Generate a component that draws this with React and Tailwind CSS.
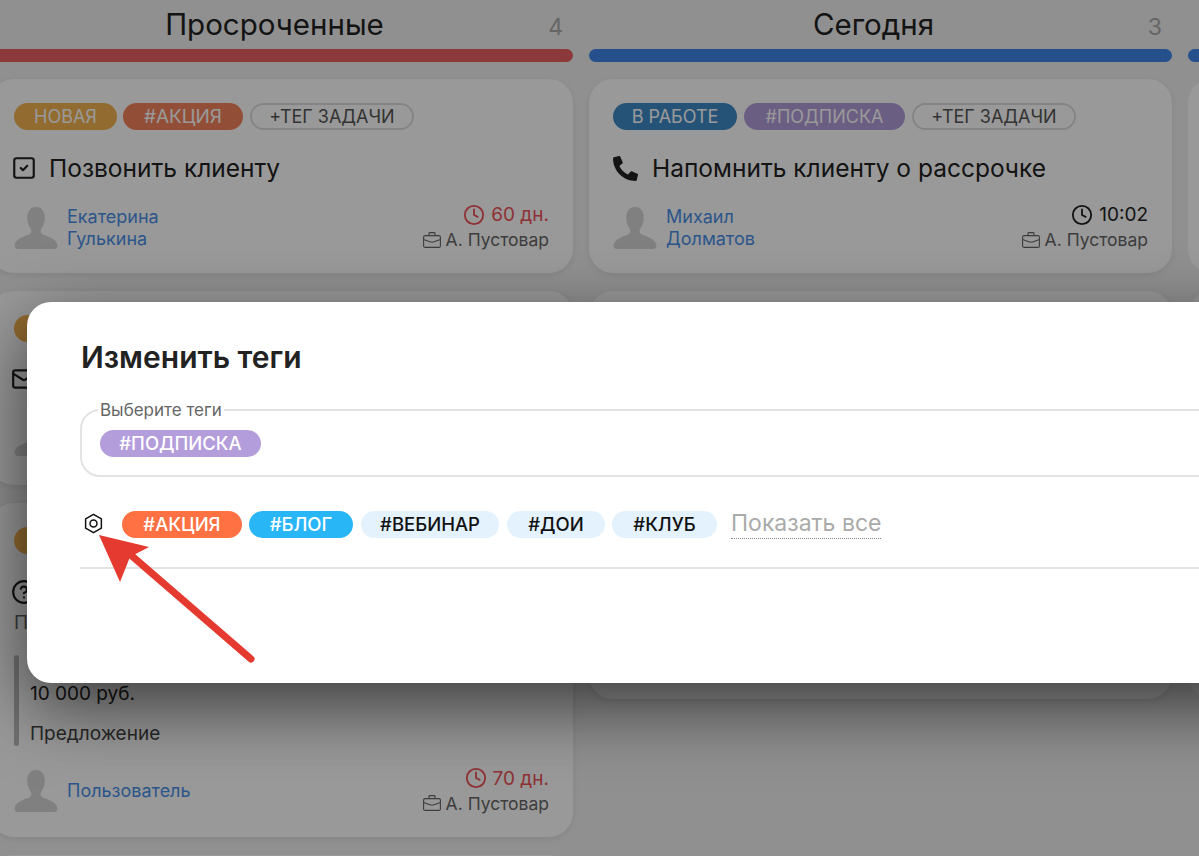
import React from 'react'
import { Clock, SquareCheck, Mail, CircleHelp } from 'lucide-react'
import { FaPhoneAlt } from 'react-icons/fa'

const font = { fontFamily: 'Inter, "Noto Sans", sans-serif' }

const Avatar = () => (
  <svg viewBox="0 0 44 43" className="w-[44px] h-[42px] shrink-0 text-[#d6d6d6]" fill="currentColor">
    <path d="M22 0c6 0 9 5 9 11 0 5-2 9-4 12-1 3 1 5 4 6 6 2 12 5 13 10 0 2-1 4-3 4H3c-2 0-3-2-3-4 1-5 7-8 13-10 3-1 5-3 4-6-2-3-4-7-4-12 0-6 3-11 9-11z" />
  </svg>
)

const Case = () => (
  <svg viewBox="0 0 18 16" className="w-[18px] h-[16px]" fill="none" stroke="currentColor" strokeWidth="1.1" strokeLinejoin="round">
    <rect x="0.6" y="3.6" width="16.8" height="11.8" rx="1.5" />
    <path d="M6 3.6V1.4c0-.5.3-.8.8-.8h4.4c.5 0 .8.3.8.8v2.2" />
    <path d="M0.6 7.5 7.5 10h3l6.9-2.5" />
  </svg>
)

const Tag = ({ children, className }) => (
  <span className={`h-[27px] rounded-full flex items-center justify-center leading-none whitespace-nowrap ${className}`}>{children}</span>
)

const Footer = ({ name, time, late }) => (
  <div className="flex justify-between items-start">
    <div className="flex items-center gap-[9px] text-[18px] leading-[22px] text-[#4a8fe8]">
      <Avatar />
      <div>{name.map((n) => <div key={n}>{n}</div>)}</div>
    </div>
    <div className="flex flex-col items-end -mt-[4px]">
      <div className={`flex items-center gap-[6px] text-[19px] leading-[25px] ${late ? 'text-[#ee5358]' : 'text-[#222]'}`}>
        <Clock size={22} strokeWidth={2} />
        {time}
      </div>
      <div className="flex items-center gap-[5px] text-[17.5px] leading-[25px] text-[#666]">
        <Case />
        А. Пустовар
      </div>
    </div>
  </div>
)

const Card = ({ tags, addWidth, icon, title, children, footer, className }) => (
  <div className={`bg-white rounded-[24px] px-6 pt-6 shadow-[0_2px_6px_rgba(0,0,0,0.08)] ${className}`}>
    <div className="flex gap-[7px]">
      {tags}
      {addWidth && <Tag className={`text-[18px] border-2 border-[#ddd] text-[#555] ${addWidth}`}>+ТЕГ ЗАДАЧИ</Tag>}
    </div>
    <div className="flex items-center gap-[14px] mt-[23px] h-[30px] text-[24.5px] leading-[30px] text-[#222]">
      {icon}
      {title}
    </div>
    {children}
    <div className="mt-[23px]">{footer}</div>
  </div>
)

const Column = ({ title, count, bar, children }) => (
  <div className="w-[583px] shrink-0">
    <div className="relative h-[49px] pr-[14px] flex items-center justify-center text-[29.5px] text-[#222]">
      {title}
      <span className="absolute right-[10px] top-[13px] text-[23px] leading-[28px] text-[#aaa]">{count}</span>
    </div>
    <div className={`h-[13px] rounded-full ${bar}`} />
    <div className="flex flex-col gap-[18px] mt-[17px]">{children}</div>
  </div>
)

const orange = 'bg-[#f4b350] text-white text-[18px]'
const red = 'bg-[#f5825c] text-white text-[19px]'
const boxIcon = '-ml-[3px] -mr-[2px] shrink-0'
const chip = 'text-[18.5px] font-medium'

export default function App() {
  return (
    <div style={font} className="relative w-[1199px] h-[856px] overflow-hidden bg-[#f0f0f0]">
      <div className="flex gap-[16px] -ml-[10px]">
        <Column title="Просроченные" count="4" bar="bg-[#e96064]">
          <Card
            className="h-[194px]"
            addWidth="w-[164px]"
            tags={<><Tag className={`${orange} w-[103px]`}>НОВАЯ</Tag><Tag className={`${red} w-[120px] -ml-[1px]`}>#АКЦИЯ</Tag></>}
            icon={<SquareCheck size={26} strokeWidth={2} className={boxIcon} />}
            title="Позвонить клиенту"
            footer={<Footer name={['Екатерина', 'Гулькина']} time="60 дн." late />}
          />
          <div className="h-[194px] bg-white rounded-[24px] px-6 pt-6 shadow-[0_2px_6px_rgba(0,0,0,0.08)]">
            <div className={`h-[27px] w-[103px] rounded-full ${orange}`} />
            <Mail size={26} strokeWidth={2} className="-ml-[3px] mt-[24px] text-[#222]" />
            <div className="mt-[22px]"><Avatar /></div>
          </div>
          <Card
            className="h-[334px]"
            tags={<div className={`h-[27px] w-[103px] rounded-full ${orange}`} />}
            icon={<CircleHelp size={26} strokeWidth={2} className={boxIcon} />}
            footer={<div className="pt-[1px]"><Footer name={['Пользователь']} time="70 дн." late /></div>}
          >
            <div className="mt-[2px] text-[19px] text-[#666]">Предложение</div>
            <div className="flex gap-[11px] mt-[17px]">
              <div className="w-[5px] h-[91px] rounded-full bg-[#bbb]" />
              <div className="text-[19px] leading-[24px] text-[#222]">
                <div className="text-[#4a8fe8]">Сделка</div>
                <div className="mt-[3px]">10 000 руб.</div>
                <div className="mt-[16px] text-[#444]">Предложение</div>
              </div>
            </div>
          </Card>
          <div className="h-[100px] bg-white rounded-[24px]" />
        </Column>

        <Column title="Сегодня" count="3" bar="bg-[#3f86e8]">
          <Card
            className="h-[194px]"
            addWidth="w-[164px]"
            tags={<><Tag className="text-[18px] bg-[#3f8bc9] text-white w-[124px]">В РАБОТЕ</Tag><Tag className="text-[18px] bg-[#b39ddb] text-white w-[161px]">#ПОДПИСКА</Tag></>}
            icon={<FaPhoneAlt size={25} className="shrink-0" />}
            title="Напомнить клиенту о рассрочке"
            footer={<Footer name={['Михаил', 'Долматов']} time="10:02" />}
          />
          <div className="h-[408px] bg-white rounded-[24px] shadow-[0_2px_6px_rgba(0,0,0,0.08)]" />
        </Column>

        <Column bar="bg-[#3f86e8]">
          <div className="h-[194px] bg-white rounded-[24px]" />
          <div className="h-[408px] bg-white rounded-[24px]" />
        </Column>
      </div>

      <div className="absolute inset-0 bg-black/40" />

      <div className="absolute left-[27px] top-[302px] w-[1300px] h-[381px] bg-white rounded-[24px] shadow-[0_24px_70px_rgba(0,0,0,0.6)] pl-[53px] pr-[60px] pt-[36px]">
        <h2 className="ml-[1px] text-[30px] leading-[38px] font-semibold text-[#222]">Изменить теги</h2>

        <fieldset className="mt-[24px] h-[77px] border-2 border-[#e3e3e3] rounded-[20px] pl-[18px]">
          <legend className="-ml-[2px] px-[2px] text-[17px] leading-[20px] text-[#666]">Выберите теги</legend>
          <Tag className={`${chip} bg-[#b39ddb] text-white w-[161px] mt-[10px]`}>#ПОДПИСКА</Tag>
        </fieldset>

        <div className="flex items-center gap-[7px] mt-[32px]">
          <svg viewBox="0 0 24 24" className="w-[21px] h-[21px] ml-[3px] mr-[11px] -mt-[2px] text-[#111]" fill="none" stroke="currentColor" strokeWidth="1.7" strokeLinejoin="round">
            <path d="M12 1.5 21 6.7v10.6L12 22.5 3 17.3V6.7z" />
            <circle cx="12" cy="12" r="4" />
          </svg>
          <Tag className={`${chip} bg-[#ff7043] text-white w-[120px]`}>#АКЦИЯ</Tag>
          <Tag className={`${chip} bg-[#29b6f6] text-white w-[104px]`}>#БЛОГ</Tag>
          <Tag className={`${chip} bg-[#e3f2fd] text-[#111] w-[138px] ml-[1px]`}>#ВЕБИНАР</Tag>
          <Tag className={`${chip} bg-[#e3f2fd] text-[#111] w-[98px] ml-[1px]`}>#ДОИ</Tag>
          <Tag className={`${chip} bg-[#e3f2fd] text-[#111] w-[105px]`}>#КЛУБ</Tag>
          <span className="ml-[7px] text-[23px] leading-[29px] text-[#aaa] border-b border-dotted border-[#888]">Показать все</span>
        </div>

        <div className="mt-[28px] h-[2px] bg-[#e3e3e3]" />
      </div>

      {/* стрелка поверх окна */}
      <svg className="absolute left-0 top-0 pointer-events-none" width="1199" height="856">
        <path d="M251 659 125 550" stroke="#e53a2f" strokeWidth="7" strokeLinecap="round" />
        <polygon points="99,535 149,547 130,557 120,582" fill="#e53a2f" />
      </svg>
    </div>
  )
}
